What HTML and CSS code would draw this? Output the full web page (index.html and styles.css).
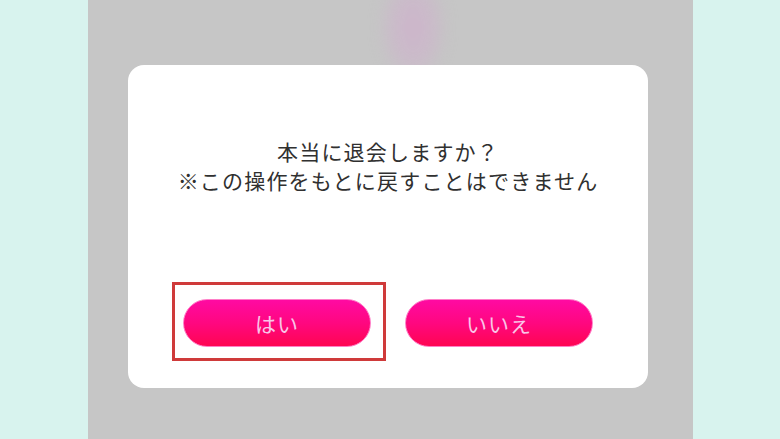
FILE: index.html
```html
<!DOCTYPE html>
<html lang="ja">
<head>
<meta charset="utf-8">
<link rel="stylesheet" href="styles.css">
</head>
<body>
<div class="page">
  <div class="screen">
    <div class="blob"></div>
    <div class="dialog">
      <div class="message">
        <p class="line">本当に退会しますか？</p>
        <p class="line">※この操作をもとに戻すことはできません</p>
      </div>
      <div class="actions">
        <div class="btn-wrap">
          <button class="btn">はい</button>
          <span class="highlight"></span>
        </div>
        <div class="btn-wrap">
          <button class="btn">いいえ</button>
        </div>
      </div>
    </div>
  </div>
</div>
</body>
</html>
```
FILE: styles.css
```css
html, body {
  margin: 0;
  padding: 0;
}
body {
  background: #d8f3ee;
  font-family: "Noto Sans CJK JP", "Noto Sans", sans-serif;
}
.page {
  width: 780px;
  height: 439px;
  display: flex;
  justify-content: center;
  padding-left: 1px;
  box-sizing: border-box;
}
.screen {
  position: relative;
  width: 605px;
  height: 439px;
  background: #c6c6c6;
  padding-top: 65px;
  box-sizing: border-box;
  overflow: hidden;
}
.blob {
  position: absolute;
  left: 290px;
  top: -30px;
  width: 70px;
  height: 115px;
  border-radius: 50%;
  background: radial-gradient(ellipse at center, #cdb5cb 0%, #cabbc9 40%, rgba(198,198,198,0) 72%);
  filter: blur(6px);
}
.dialog {
  position: relative;
  width: 520px;
  height: 323px;
  margin: 0 auto 0 40px;
  background: #ffffff;
  border-radius: 16px;
  padding-top: 72px;
  box-sizing: border-box;
  display: flex;
  flex-direction: column;
  align-items: center;
}
.message {
  text-align: center;
  color: #303030;
  font-size: 21px;
  letter-spacing: 1.2px;
  line-height: 29px;
}
.line {
  margin: 0;
}
.actions {
  margin-top: 104px;
  display: flex;
  gap: 34px;
}
.btn-wrap {
  position: relative;
}
.btn {
  width: 188px;
  height: 48px;
  border: 1px solid #ff7fc8;
  border-radius: 24px;
  background: linear-gradient(to bottom, #ff0aa2 0%, #ff0780 50%, #ff0552 100%);
  color: #f9c6e8;
  font-family: "Noto Sans CJK JP", "Noto Sans", sans-serif;
  font-size: 21px;
  letter-spacing: 1px;
  padding: 0;
  display: block;
}
.highlight {
  position: absolute;
  left: -11px;
  top: -17px;
  width: 214px;
  height: 79px;
  border: 3px solid #cf3a3a;
  box-sizing: border-box;
  pointer-events: none;
}
```
